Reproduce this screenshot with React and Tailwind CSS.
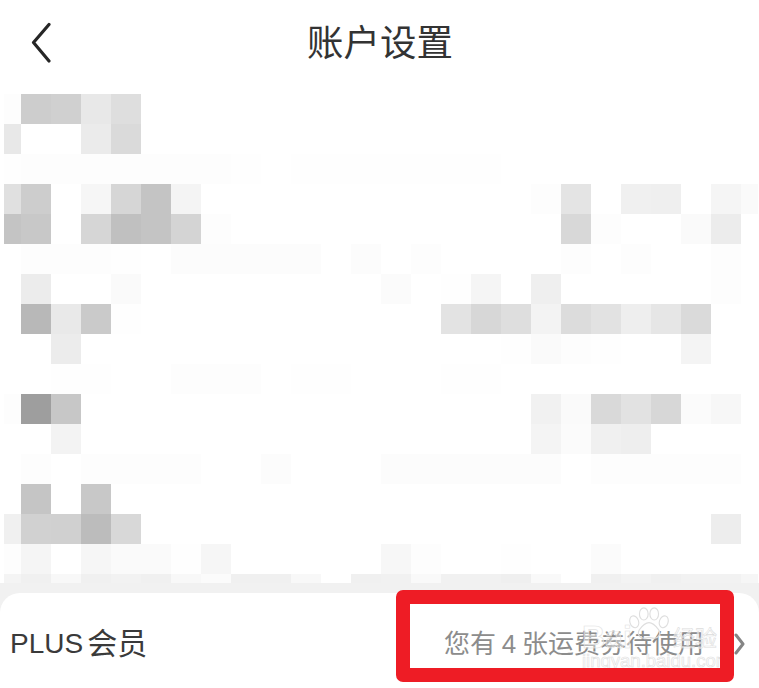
const CJK = '"Liberation Sans","Noto Sans CJK SC",sans-serif';

// Sparse grey levels per mosaic row: column index -> grey hex (default white)
const ROWS = [
  { 0: 'fd', 1: 'cd', 2: 'd0', 3: 'e8', 4: 'de' },
  { 0: 'e8', 3: 'eb', 4: 'da' },
  { 0: 'fe', 1: 'fd', 2: 'fd', 3: 'fd', 4: 'fd', 5: 'fd', 6: 'fd', 7: 'fd', 8: 'fe', 10: 'fe', 11: 'fe', 12: 'fe', 13: 'fe', 14: 'fe', 15: 'fe', 16: 'fe' },
  { 0: 'e0', 1: 'cd', 3: 'f6', 4: 'd6', 5: 'c4', 6: 'f4', 18: 'fd', 19: 'e4', 21: 'f0', 22: 'ef', 24: 'f5', 25: 'fa' },
  { 0: 'c4', 1: 'c8', 3: 'd6', 4: 'c0', 5: 'c4', 6: 'd4', 7: 'fd', 19: 'd8', 20: 'fd', 23: 'fa', 24: 'ec' },
  { 1: 'fd', 2: 'fd', 3: 'fd', 4: 'fe', 6: 'fc', 7: 'fc', 8: 'fc', 9: 'fc', 10: 'fc', 12: 'fc', 14: 'fd', 19: 'fd', 21: 'fd', 24: 'fd' },
  { 1: 'ec', 4: 'fa', 13: 'fb', 15: 'fe', 16: 'f5', 18: 'ef', 24: 'fd' },
  { 1: 'b8', 2: 'e9', 3: 'ca', 4: 'fe', 15: 'e3', 16: 'd7', 17: 'de', 18: 'f3', 19: 'dc', 20: 'e2', 21: 'ee', 22: 'e6', 23: 'da' },
  { 2: 'ec', 17: 'fe', 18: 'fa', 19: 'fd', 20: 'fe', 23: 'f4' },
  { 2: 'fe', 3: 'fe', 6: 'fd', 7: 'fd', 8: 'fd', 10: 'fe', 11: 'fe', 15: 'fe', 16: 'fe' },
  { 0: 'fd', 1: '9e', 2: 'c7', 18: 'f1', 19: 'fa', 20: 'd9', 21: 'e2', 22: 'd7', 23: 'fb', 24: 'f7' },
  { 2: 'f3', 18: 'f4', 19: 'fb', 20: 'f0', 21: 'ee' },
  { 1: 'fd', 3: 'fd', 4: 'fd', 5: 'fd', 6: 'fd', 9: 'fc', 13: 'fc', 14: 'fc', 15: 'fc', 16: 'fc', 17: 'fc', 18: 'fc', 20: 'fd', 21: 'fd', 22: 'fd', 23: 'fd', 24: 'fd' },
  { 1: 'c5', 3: 'c8' },
  { 0: 'f0', 1: 'd1', 2: 'd0', 3: 'bc', 4: 'd8', 24: 'ed' },
  { 0: 'fd', 1: 'f5', 3: 'f6', 4: 'fa', 5: 'fa', 6: 'fe', 7: 'f6', 13: 'f7', 14: 'fd', 17: 'fe', 20: 'fb' },
  { 0: 'f4', 1: 'f0', 2: 'f8', 3: 'f0', 4: 'f2', 5: 'f0', 6: 'f8', 7: 'fb', 8: 'f0', 9: 'f0', 10: 'f8', 12: 'f0', 13: 'f1', 14: 'f9', 15: 'f1', 16: 'f1', 17: 'ef', 18: 'f9', 20: 'f0', 21: 'f3', 22: 'f0', 23: 'f2', 24: 'f2', 25: 'f6' },
];

function Mosaic() {
  return (
    <div className="ml-[4px] grid grid-cols-[17px_repeat(24,30px)_17px] grid-rows-[repeat(16,30px)_9px]">
      {ROWS.flatMap((row, r) =>
        Array.from({ length: 26 }, (_, c) => {
          const g = row[c] || 'ff';
          return <div key={`${r}-${c}`} style={{ backgroundColor: `#${g}${g}${g}` }} />;
        })
      )}
    </div>
  );
}

function Paw() {
  return (
    <svg width="42" height="33" viewBox="0 0 48 38" fill="none" stroke="#dedede" strokeWidth="1.3">
      <ellipse cx="7" cy="17" rx="5" ry="7" transform="rotate(-18 7 17)" />
      <ellipse cx="18" cy="8" rx="5" ry="7" />
      <ellipse cx="30" cy="8" rx="5" ry="7" />
      <ellipse cx="41" cy="17" rx="5" ry="7" transform="rotate(18 41 17)" />
      <path d="M24 18c5 0 8 4 11 8 3 5 0 10-5 10-3 0-4-1-6-1s-3 1-6 1c-5 0-8-5-5-10 3-4 6-8 11-8z" />
    </svg>
  );
}

export default function App() {
  return (
    <div className="relative flex h-[688px] w-[759px] flex-col overflow-hidden bg-white" style={{ fontFamily: CJK }}>
      <header className="relative flex h-[94px] shrink-0 justify-center pl-[1px] pt-[23px]">
        <svg className="absolute left-[31px] top-[22px]" width="20" height="41" viewBox="0 0 20 41" fill="none">
          <polyline points="18,2.5 2.5,20.5 18,39" stroke="#262626" strokeWidth="3.2" strokeLinecap="round" strokeLinejoin="round" />
        </svg>
        <h1 className="text-[36.5px] font-normal leading-[42px] text-[#333333]">账户设置</h1>
      </header>

      <Mosaic />

      <div className="flex min-h-0 flex-1 flex-col bg-[#f1f1f1] pt-[10px]">
        <div className="flex flex-1 items-center justify-between rounded-t-[20px] bg-white pl-[10px] pr-[14px] pt-[7px]">
          <span className="flex items-center gap-[4px] text-[#3a3a3a]">
            <span className="text-[28px] leading-[34px]">PLUS</span>
            <span className="text-[30px] leading-[34px]">会员</span>
          </span>
          <div className="flex items-center gap-[30px]">
            <span className="text-[26px] leading-[32px] text-[#8c8c8c] [word-spacing:-1.5px]">您有 4 张运费券待使用</span>
            <svg width="11" height="22" viewBox="0 0 11 22" fill="none">
              <polyline points="2,2 9,11 2,20" stroke="#858585" strokeWidth="3" strokeLinecap="round" strokeLinejoin="round" />
            </svg>
          </div>
        </div>
      </div>

      {/* Watermark laid over the row */}
      <div className="absolute left-[582px] top-[607px] h-[70px] w-[140px]">
        <span className="absolute left-0 top-[12px] text-[32px] font-bold leading-[36px] text-white/40 [-webkit-text-stroke:0.6px_#e2e2e2]">Bai</span>
        <div className="absolute left-[46px] top-0"><Paw /></div>
        <span className="absolute left-[91px] top-[19px] text-[22px] leading-[26px] text-white/50 [-webkit-text-stroke:0.6px_#dcdcdc]">经验</span>
        <span className="absolute left-0 top-[43px] text-[18.5px] leading-[22px] text-white/70 [-webkit-text-stroke:0.6px_#dedede]">jingyan.baidu.com</span>
      </div>

      {/* Red annotation frame */}
      <div className="absolute left-[396px] top-[590px] h-[92px] w-[338px] rounded-[7px] border-[14px] border-[#ee1c25]" />
    </div>
  );
}
